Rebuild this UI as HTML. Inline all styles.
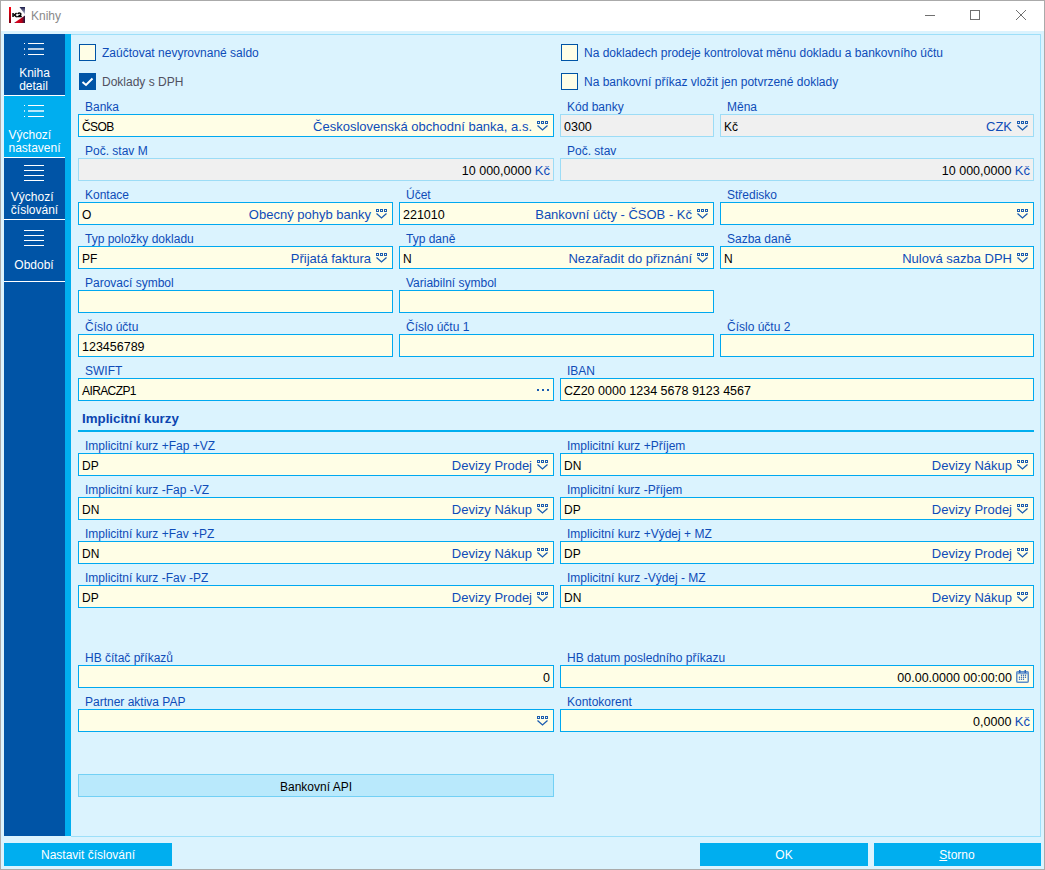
<!DOCTYPE html><html><head><meta charset="utf-8"><style>html,body{margin:0;padding:0;overflow:hidden;}body{width:1045px;height:870px;position:relative;overflow:hidden;background:#dbf3fe;font-family:"Liberation Sans",sans-serif;font-size:12px;}body>div,body>svg{position:absolute;}.t{white-space:nowrap;line-height:14px;}</style></head><body>
<div style="left:0px;top:0px;width:1045px;height:870px;background:#aaaaaa;"></div>
<div style="left:1px;top:1px;width:1043px;height:868px;background:#dbf3fe;"></div>
<div style="left:1px;top:1px;width:1043px;height:30px;background:#ffffff;"></div>
<svg style="left:9px;top:7px" width="16" height="16" viewBox="0 0 16 16"><defs><linearGradient id="rb" x1="0" y1="0" x2="0" y2="1"><stop offset="0" stop-color="#ff0010"/><stop offset="1" stop-color="#7a0010"/></linearGradient><linearGradient id="br" x1="0" y1="0" x2="1" y2="0"><stop offset="0" stop-color="#2a1a50"/><stop offset="0.25" stop-color="#e0001a"/><stop offset="0.7" stop-color="#b00018"/><stop offset="1" stop-color="#1a1a40"/></linearGradient><linearGradient id="tr" x1="0" y1="0" x2="0" y2="1"><stop offset="0" stop-color="#1a1a48"/><stop offset="1" stop-color="#c8cce0"/></linearGradient></defs><polygon points="10.5,0 16,0 16,7.5" fill="url(#tr)"/><polygon points="5,16 16,16 16,8.5" fill="url(#br)"/><rect x="0" y="0" width="2" height="16" fill="url(#rb)"/><rect x="3.3" y="6" width="1.5" height="4" fill="#000"/><path d="M7.6 6.2L5.4 8L7.6 9.8" fill="none" stroke="#000" stroke-width="1.5"/><path d="M8.6 7Q9.6 5.8 11 6.1Q12.4 6.6 11.6 7.9L9.2 9.5L12.8 9.5" fill="none" stroke="#000" stroke-width="1.4"/></svg>
<div class="t" style="left:31px;top:9px;color:#8a8a8a;font-size:12px;">Knihy</div>
<div style="left:925px;top:15px;width:10px;height:1px;background:#707070;"></div>
<div style="left:970px;top:10px;width:8px;height:8px;border:1px solid #707070"></div>
<svg style="left:1016px;top:10px" width="10" height="10" viewBox="0 0 10 10"><path d="M0 0L10 10M10 0L0 10" stroke="#707070" stroke-width="1"/></svg>
<div style="left:4px;top:34px;width:61px;height:802px;background:#0054a6;"></div>
<div style="left:65px;top:34px;width:6px;height:802px;background:#00aeef;"></div>
<div style="left:4px;top:95px;width:61px;height:1px;background:#ffffff;"></div>
<div style="left:24px;top:43px;width:1px;height:1px;background:#fff"></div>
<div style="left:28px;top:43px;width:16px;height:1px;background:#fff"></div>
<div style="left:24px;top:48px;width:1px;height:2px;background:rgba(255,255,255,0.72)"></div>
<div style="left:28px;top:48px;width:16px;height:2px;background:rgba(255,255,255,0.72)"></div>
<div style="left:24px;top:54px;width:1px;height:1px;background:#fff"></div>
<div style="left:28px;top:54px;width:16px;height:1px;background:#fff"></div>
<div style="left:4px;width:61px;top:67px;text-align:center;color:#fff;line-height:13px"><div style="display:inline-block;text-align:left;white-space:nowrap">Kniha<br>detail</div></div>
<div style="left:4px;top:96px;width:67px;height:61px;background:#00aeef;"></div>
<div style="left:4px;top:157px;width:61px;height:1px;background:#ffffff;"></div>
<div style="left:24px;top:105px;width:1px;height:1px;background:#fff"></div>
<div style="left:28px;top:105px;width:16px;height:1px;background:#fff"></div>
<div style="left:24px;top:110px;width:1px;height:2px;background:rgba(255,255,255,0.72)"></div>
<div style="left:28px;top:110px;width:16px;height:2px;background:rgba(255,255,255,0.72)"></div>
<div style="left:24px;top:116px;width:1px;height:1px;background:#fff"></div>
<div style="left:28px;top:116px;width:16px;height:1px;background:#fff"></div>
<div style="left:4px;width:61px;top:129px;text-align:center;color:#fff;line-height:13px"><div style="display:inline-block;text-align:left;white-space:nowrap">Výchozí<br>nastavení</div></div>
<div style="left:4px;top:219px;width:61px;height:1px;background:#ffffff;"></div>
<div style="left:24px;top:165px;width:20px;height:1px;background:#ffffff;"></div>
<div style="left:24px;top:170px;width:20px;height:1px;background:#ffffff;"></div>
<div style="left:24px;top:175px;width:20px;height:1px;background:#ffffff;"></div>
<div style="left:24px;top:180px;width:20px;height:1px;background:#ffffff;"></div>
<div style="left:4px;width:61px;top:191px;text-align:center;color:#fff;line-height:13px"><div style="display:inline-block;text-align:left;white-space:nowrap">Výchozí<br>číslování</div></div>
<div style="left:4px;top:281px;width:61px;height:1px;background:#ffffff;"></div>
<div style="left:24px;top:230px;width:20px;height:1px;background:#ffffff;"></div>
<div style="left:24px;top:235px;width:20px;height:1px;background:#ffffff;"></div>
<div style="left:24px;top:240px;width:20px;height:1px;background:#ffffff;"></div>
<div style="left:24px;top:245px;width:20px;height:1px;background:#ffffff;"></div>
<div class="t" style="left:4px;width:60px;top:258px;color:#fff;text-align:center;">Období</div>
<div style="left:71px;top:34px;width:970px;height:1px;background:#9ddff9;"></div>
<div style="left:1040px;top:34px;width:1px;height:803px;background:#9ddff9;"></div>
<div style="left:71px;top:836px;width:970px;height:1px;background:#9ddff9;"></div>
<div style="left:79px;top:44px;width:15px;height:15px;background:#fffee6;border:1px solid #0054a6"></div>
<div class="t" style="left:102px;top:46px;color:#0e4cb8;">Zaúčtovat nevyrovnané saldo</div>
<div style="left:79px;top:73px;width:17px;height:17px;background:#0054a6"></div>
<svg style="left:79px;top:73px" width="17" height="17" viewBox="0 0 17 17"><polyline points="3.5,9 7,12 13.5,5.5" fill="none" stroke="#fff" stroke-width="2"/></svg>
<div class="t" style="left:102px;top:75px;color:#505060;">Doklady s DPH</div>
<div style="left:561px;top:44px;width:15px;height:15px;background:#fffee6;border:1px solid #0054a6"></div>
<div class="t" style="left:584px;top:46px;color:#0e4cb8;">Na dokladech prodeje kontrolovat měnu dokladu a bankovního účtu</div>
<div style="left:561px;top:73px;width:15px;height:15px;background:#fffee6;border:1px solid #0054a6"></div>
<div class="t" style="left:584px;top:75px;color:#0e4cb8;">Na bankovní příkaz vložit jen potvrzené doklady</div>
<div style="left:78px;top:114px;width:474px;height:21px;background:#fffee6;border:1px solid #00a8f0"></div>
<div class="t" style="left:85px;top:100px;color:#0e4cb8;">Banka</div>
<div class="t" style="left:82px;top:120px;color:#000;letter-spacing:-0.6px;">ČSOB</div>
<svg style="left:537px;top:121px" width="12" height="10" viewBox="0 0 12 10"><rect x="0.5" y="0.5" width="2" height="2" fill="none" stroke="#1b5cb0" stroke-width="1"/><rect x="4.5" y="0.5" width="2" height="2" fill="none" stroke="#1b5cb0" stroke-width="1"/><rect x="8.5" y="0.5" width="2" height="2" fill="none" stroke="#1b5cb0" stroke-width="1"/><polyline points="0.5,4.5 5.5,9 10.5,4.5" fill="none" stroke="#1b5cb0" stroke-width="1.3"/></svg>
<div class="t" style="right:513px;top:120px;color:#0e4cb8;text-align:right;font-size:13px;">Československá obchodní banka, a.s.</div>
<div style="left:560px;top:114px;width:152px;height:21px;background:#f0f0f0;border:1px solid #9cdcf6"></div>
<div class="t" style="left:567px;top:100px;color:#0e4cb8;">Kód banky</div>
<div class="t" style="left:564px;top:120px;color:#000;font-size:12.5px;">0300</div>
<div style="left:720px;top:114px;width:312px;height:21px;background:#f0f0f0;border:1px solid #9cdcf6"></div>
<div class="t" style="left:727px;top:100px;color:#0e4cb8;">Měna</div>
<div class="t" style="left:724px;top:120px;color:#000;">Kč</div>
<svg style="left:1017px;top:121px" width="12" height="10" viewBox="0 0 12 10"><rect x="0.5" y="0.5" width="2" height="2" fill="none" stroke="#1b5cb0" stroke-width="1"/><rect x="4.5" y="0.5" width="2" height="2" fill="none" stroke="#1b5cb0" stroke-width="1"/><rect x="8.5" y="0.5" width="2" height="2" fill="none" stroke="#1b5cb0" stroke-width="1"/><polyline points="0.5,4.5 5.5,9 10.5,4.5" fill="none" stroke="#1b5cb0" stroke-width="1.3"/></svg>
<div class="t" style="right:33px;top:120px;color:#0e4cb8;text-align:right;font-size:13px;">CZK</div>
<div style="left:78px;top:158px;width:474px;height:21px;background:#f0f0f0;border:1px solid #9cdcf6"></div>
<div class="t" style="left:85px;top:144px;color:#0e4cb8;">Poč. stav M</div>
<div class="t" style="right:495px;top:164px;color:#000;text-align:right;font-size:12.5px;">10 000,0000 <span style="color:#0e4cb8;font-size:13px">Kč</span></div>
<div style="left:560px;top:158px;width:472px;height:21px;background:#f0f0f0;border:1px solid #9cdcf6"></div>
<div class="t" style="left:567px;top:144px;color:#0e4cb8;">Poč. stav</div>
<div class="t" style="right:15px;top:164px;color:#000;text-align:right;font-size:12.5px;">10 000,0000 <span style="color:#0e4cb8;font-size:13px">Kč</span></div>
<div style="left:78px;top:202px;width:313px;height:21px;background:#fffee6;border:1px solid #00a8f0"></div>
<div class="t" style="left:85px;top:188px;color:#0e4cb8;">Kontace</div>
<div class="t" style="left:82px;top:208px;color:#000;">O</div>
<svg style="left:376px;top:209px" width="12" height="10" viewBox="0 0 12 10"><rect x="0.5" y="0.5" width="2" height="2" fill="none" stroke="#1b5cb0" stroke-width="1"/><rect x="4.5" y="0.5" width="2" height="2" fill="none" stroke="#1b5cb0" stroke-width="1"/><rect x="8.5" y="0.5" width="2" height="2" fill="none" stroke="#1b5cb0" stroke-width="1"/><polyline points="0.5,4.5 5.5,9 10.5,4.5" fill="none" stroke="#1b5cb0" stroke-width="1.3"/></svg>
<div class="t" style="right:674px;top:208px;color:#0e4cb8;text-align:right;font-size:13px;">Obecný pohyb banky</div>
<div style="left:399px;top:202px;width:313px;height:21px;background:#fffee6;border:1px solid #00a8f0"></div>
<div class="t" style="left:406px;top:188px;color:#0e4cb8;">Účet</div>
<div class="t" style="left:403px;top:208px;color:#000;font-size:12.5px;">221010</div>
<svg style="left:697px;top:209px" width="12" height="10" viewBox="0 0 12 10"><rect x="0.5" y="0.5" width="2" height="2" fill="none" stroke="#1b5cb0" stroke-width="1"/><rect x="4.5" y="0.5" width="2" height="2" fill="none" stroke="#1b5cb0" stroke-width="1"/><rect x="8.5" y="0.5" width="2" height="2" fill="none" stroke="#1b5cb0" stroke-width="1"/><polyline points="0.5,4.5 5.5,9 10.5,4.5" fill="none" stroke="#1b5cb0" stroke-width="1.3"/></svg>
<div class="t" style="right:353px;top:208px;color:#0e4cb8;text-align:right;font-size:13px;">Bankovní účty - ČSOB - Kč</div>
<div style="left:720px;top:202px;width:312px;height:21px;background:#fffee6;border:1px solid #00a8f0"></div>
<div class="t" style="left:727px;top:188px;color:#0e4cb8;">Středisko</div>
<svg style="left:1017px;top:209px" width="12" height="10" viewBox="0 0 12 10"><rect x="0.5" y="0.5" width="2" height="2" fill="none" stroke="#1b5cb0" stroke-width="1"/><rect x="4.5" y="0.5" width="2" height="2" fill="none" stroke="#1b5cb0" stroke-width="1"/><rect x="8.5" y="0.5" width="2" height="2" fill="none" stroke="#1b5cb0" stroke-width="1"/><polyline points="0.5,4.5 5.5,9 10.5,4.5" fill="none" stroke="#1b5cb0" stroke-width="1.3"/></svg>
<div style="left:78px;top:246px;width:313px;height:21px;background:#fffee6;border:1px solid #00a8f0"></div>
<div class="t" style="left:85px;top:232px;color:#0e4cb8;">Typ položky dokladu</div>
<div class="t" style="left:82px;top:252px;color:#000;">PF</div>
<svg style="left:376px;top:253px" width="12" height="10" viewBox="0 0 12 10"><rect x="0.5" y="0.5" width="2" height="2" fill="none" stroke="#1b5cb0" stroke-width="1"/><rect x="4.5" y="0.5" width="2" height="2" fill="none" stroke="#1b5cb0" stroke-width="1"/><rect x="8.5" y="0.5" width="2" height="2" fill="none" stroke="#1b5cb0" stroke-width="1"/><polyline points="0.5,4.5 5.5,9 10.5,4.5" fill="none" stroke="#1b5cb0" stroke-width="1.3"/></svg>
<div class="t" style="right:674px;top:252px;color:#0e4cb8;text-align:right;font-size:13px;">Přijatá faktura</div>
<div style="left:399px;top:246px;width:313px;height:21px;background:#fffee6;border:1px solid #00a8f0"></div>
<div class="t" style="left:406px;top:232px;color:#0e4cb8;">Typ daně</div>
<div class="t" style="left:403px;top:252px;color:#000;">N</div>
<svg style="left:697px;top:253px" width="12" height="10" viewBox="0 0 12 10"><rect x="0.5" y="0.5" width="2" height="2" fill="none" stroke="#1b5cb0" stroke-width="1"/><rect x="4.5" y="0.5" width="2" height="2" fill="none" stroke="#1b5cb0" stroke-width="1"/><rect x="8.5" y="0.5" width="2" height="2" fill="none" stroke="#1b5cb0" stroke-width="1"/><polyline points="0.5,4.5 5.5,9 10.5,4.5" fill="none" stroke="#1b5cb0" stroke-width="1.3"/></svg>
<div class="t" style="right:353px;top:252px;color:#0e4cb8;text-align:right;font-size:13px;">Nezařadit do přiznání</div>
<div style="left:720px;top:246px;width:312px;height:21px;background:#fffee6;border:1px solid #00a8f0"></div>
<div class="t" style="left:727px;top:232px;color:#0e4cb8;">Sazba daně</div>
<div class="t" style="left:724px;top:252px;color:#000;">N</div>
<svg style="left:1017px;top:253px" width="12" height="10" viewBox="0 0 12 10"><rect x="0.5" y="0.5" width="2" height="2" fill="none" stroke="#1b5cb0" stroke-width="1"/><rect x="4.5" y="0.5" width="2" height="2" fill="none" stroke="#1b5cb0" stroke-width="1"/><rect x="8.5" y="0.5" width="2" height="2" fill="none" stroke="#1b5cb0" stroke-width="1"/><polyline points="0.5,4.5 5.5,9 10.5,4.5" fill="none" stroke="#1b5cb0" stroke-width="1.3"/></svg>
<div class="t" style="right:33px;top:252px;color:#0e4cb8;text-align:right;font-size:13px;">Nulová sazba DPH</div>
<div style="left:78px;top:290px;width:313px;height:21px;background:#fffee6;border:1px solid #00a8f0"></div>
<div class="t" style="left:85px;top:276px;color:#0e4cb8;">Parovací symbol</div>
<div style="left:399px;top:290px;width:313px;height:21px;background:#fffee6;border:1px solid #00a8f0"></div>
<div class="t" style="left:406px;top:276px;color:#0e4cb8;">Variabilní symbol</div>
<div style="left:78px;top:334px;width:313px;height:21px;background:#fffee6;border:1px solid #00a8f0"></div>
<div class="t" style="left:85px;top:320px;color:#0e4cb8;">Číslo účtu</div>
<div class="t" style="left:82px;top:340px;color:#000;font-size:12.5px;">123456789</div>
<div style="left:399px;top:334px;width:313px;height:21px;background:#fffee6;border:1px solid #00a8f0"></div>
<div class="t" style="left:406px;top:320px;color:#0e4cb8;">Číslo účtu 1</div>
<div style="left:720px;top:334px;width:312px;height:21px;background:#fffee6;border:1px solid #00a8f0"></div>
<div class="t" style="left:727px;top:320px;color:#0e4cb8;">Číslo účtu 2</div>
<div style="left:78px;top:378px;width:474px;height:21px;background:#fffee6;border:1px solid #00a8f0"></div>
<div class="t" style="left:85px;top:364px;color:#0e4cb8;">SWIFT</div>
<div class="t" style="left:82px;top:384px;color:#000;letter-spacing:-0.6px;">AIRACZP1</div>
<div style="left:537px;top:389px;width:2px;height:2px;background:#1b5cb0;"></div>
<div style="left:542px;top:389px;width:2px;height:2px;background:#1b5cb0;"></div>
<div style="left:547px;top:389px;width:2px;height:2px;background:#1b5cb0;"></div>
<div style="left:560px;top:378px;width:472px;height:21px;background:#fffee6;border:1px solid #00a8f0"></div>
<div class="t" style="left:567px;top:364px;color:#0e4cb8;">IBAN</div>
<div class="t" style="left:564px;top:384px;color:#000;font-size:12.5px;">CZ20 0000 1234 5678 9123 4567</div>
<div class="t" style="left:82px;top:412px;color:#0c44b0;font-size:13.3px;font-weight:bold;">Implicitní kurzy</div>
<div style="left:78px;top:430px;width:956px;height:2px;background:#00aeef;"></div>
<div style="left:78px;top:453px;width:474px;height:21px;background:#fffee6;border:1px solid #00a8f0"></div>
<div class="t" style="left:85px;top:439px;color:#0e4cb8;">Implicitní kurz +Fap +VZ</div>
<div class="t" style="left:82px;top:459px;color:#000;">DP</div>
<svg style="left:537px;top:460px" width="12" height="10" viewBox="0 0 12 10"><rect x="0.5" y="0.5" width="2" height="2" fill="none" stroke="#1b5cb0" stroke-width="1"/><rect x="4.5" y="0.5" width="2" height="2" fill="none" stroke="#1b5cb0" stroke-width="1"/><rect x="8.5" y="0.5" width="2" height="2" fill="none" stroke="#1b5cb0" stroke-width="1"/><polyline points="0.5,4.5 5.5,9 10.5,4.5" fill="none" stroke="#1b5cb0" stroke-width="1.3"/></svg>
<div class="t" style="right:513px;top:459px;color:#0e4cb8;text-align:right;font-size:13px;">Devizy Prodej</div>
<div style="left:560px;top:453px;width:472px;height:21px;background:#fffee6;border:1px solid #00a8f0"></div>
<div class="t" style="left:567px;top:439px;color:#0e4cb8;">Implicitní kurz +Příjem</div>
<div class="t" style="left:564px;top:459px;color:#000;">DN</div>
<svg style="left:1017px;top:460px" width="12" height="10" viewBox="0 0 12 10"><rect x="0.5" y="0.5" width="2" height="2" fill="none" stroke="#1b5cb0" stroke-width="1"/><rect x="4.5" y="0.5" width="2" height="2" fill="none" stroke="#1b5cb0" stroke-width="1"/><rect x="8.5" y="0.5" width="2" height="2" fill="none" stroke="#1b5cb0" stroke-width="1"/><polyline points="0.5,4.5 5.5,9 10.5,4.5" fill="none" stroke="#1b5cb0" stroke-width="1.3"/></svg>
<div class="t" style="right:33px;top:459px;color:#0e4cb8;text-align:right;font-size:13px;">Devizy Nákup</div>
<div style="left:78px;top:497px;width:474px;height:21px;background:#fffee6;border:1px solid #00a8f0"></div>
<div class="t" style="left:85px;top:483px;color:#0e4cb8;">Implicitní kurz -Fap -VZ</div>
<div class="t" style="left:82px;top:503px;color:#000;">DN</div>
<svg style="left:537px;top:504px" width="12" height="10" viewBox="0 0 12 10"><rect x="0.5" y="0.5" width="2" height="2" fill="none" stroke="#1b5cb0" stroke-width="1"/><rect x="4.5" y="0.5" width="2" height="2" fill="none" stroke="#1b5cb0" stroke-width="1"/><rect x="8.5" y="0.5" width="2" height="2" fill="none" stroke="#1b5cb0" stroke-width="1"/><polyline points="0.5,4.5 5.5,9 10.5,4.5" fill="none" stroke="#1b5cb0" stroke-width="1.3"/></svg>
<div class="t" style="right:513px;top:503px;color:#0e4cb8;text-align:right;font-size:13px;">Devizy Nákup</div>
<div style="left:560px;top:497px;width:472px;height:21px;background:#fffee6;border:1px solid #00a8f0"></div>
<div class="t" style="left:567px;top:483px;color:#0e4cb8;">Implicitní kurz -Příjem</div>
<div class="t" style="left:564px;top:503px;color:#000;">DP</div>
<svg style="left:1017px;top:504px" width="12" height="10" viewBox="0 0 12 10"><rect x="0.5" y="0.5" width="2" height="2" fill="none" stroke="#1b5cb0" stroke-width="1"/><rect x="4.5" y="0.5" width="2" height="2" fill="none" stroke="#1b5cb0" stroke-width="1"/><rect x="8.5" y="0.5" width="2" height="2" fill="none" stroke="#1b5cb0" stroke-width="1"/><polyline points="0.5,4.5 5.5,9 10.5,4.5" fill="none" stroke="#1b5cb0" stroke-width="1.3"/></svg>
<div class="t" style="right:33px;top:503px;color:#0e4cb8;text-align:right;font-size:13px;">Devizy Prodej</div>
<div style="left:78px;top:541px;width:474px;height:21px;background:#fffee6;border:1px solid #00a8f0"></div>
<div class="t" style="left:85px;top:527px;color:#0e4cb8;">Implicitní kurz +Fav +PZ</div>
<div class="t" style="left:82px;top:547px;color:#000;">DN</div>
<svg style="left:537px;top:548px" width="12" height="10" viewBox="0 0 12 10"><rect x="0.5" y="0.5" width="2" height="2" fill="none" stroke="#1b5cb0" stroke-width="1"/><rect x="4.5" y="0.5" width="2" height="2" fill="none" stroke="#1b5cb0" stroke-width="1"/><rect x="8.5" y="0.5" width="2" height="2" fill="none" stroke="#1b5cb0" stroke-width="1"/><polyline points="0.5,4.5 5.5,9 10.5,4.5" fill="none" stroke="#1b5cb0" stroke-width="1.3"/></svg>
<div class="t" style="right:513px;top:547px;color:#0e4cb8;text-align:right;font-size:13px;">Devizy Nákup</div>
<div style="left:560px;top:541px;width:472px;height:21px;background:#fffee6;border:1px solid #00a8f0"></div>
<div class="t" style="left:567px;top:527px;color:#0e4cb8;">Implicitní kurz +Výdej + MZ</div>
<div class="t" style="left:564px;top:547px;color:#000;">DP</div>
<svg style="left:1017px;top:548px" width="12" height="10" viewBox="0 0 12 10"><rect x="0.5" y="0.5" width="2" height="2" fill="none" stroke="#1b5cb0" stroke-width="1"/><rect x="4.5" y="0.5" width="2" height="2" fill="none" stroke="#1b5cb0" stroke-width="1"/><rect x="8.5" y="0.5" width="2" height="2" fill="none" stroke="#1b5cb0" stroke-width="1"/><polyline points="0.5,4.5 5.5,9 10.5,4.5" fill="none" stroke="#1b5cb0" stroke-width="1.3"/></svg>
<div class="t" style="right:33px;top:547px;color:#0e4cb8;text-align:right;font-size:13px;">Devizy Prodej</div>
<div style="left:78px;top:585px;width:474px;height:21px;background:#fffee6;border:1px solid #00a8f0"></div>
<div class="t" style="left:85px;top:571px;color:#0e4cb8;">Implicitní kurz -Fav -PZ</div>
<div class="t" style="left:82px;top:591px;color:#000;">DP</div>
<svg style="left:537px;top:592px" width="12" height="10" viewBox="0 0 12 10"><rect x="0.5" y="0.5" width="2" height="2" fill="none" stroke="#1b5cb0" stroke-width="1"/><rect x="4.5" y="0.5" width="2" height="2" fill="none" stroke="#1b5cb0" stroke-width="1"/><rect x="8.5" y="0.5" width="2" height="2" fill="none" stroke="#1b5cb0" stroke-width="1"/><polyline points="0.5,4.5 5.5,9 10.5,4.5" fill="none" stroke="#1b5cb0" stroke-width="1.3"/></svg>
<div class="t" style="right:513px;top:591px;color:#0e4cb8;text-align:right;font-size:13px;">Devizy Prodej</div>
<div style="left:560px;top:585px;width:472px;height:21px;background:#fffee6;border:1px solid #00a8f0"></div>
<div class="t" style="left:567px;top:571px;color:#0e4cb8;">Implicitní kurz -Výdej - MZ</div>
<div class="t" style="left:564px;top:591px;color:#000;">DN</div>
<svg style="left:1017px;top:592px" width="12" height="10" viewBox="0 0 12 10"><rect x="0.5" y="0.5" width="2" height="2" fill="none" stroke="#1b5cb0" stroke-width="1"/><rect x="4.5" y="0.5" width="2" height="2" fill="none" stroke="#1b5cb0" stroke-width="1"/><rect x="8.5" y="0.5" width="2" height="2" fill="none" stroke="#1b5cb0" stroke-width="1"/><polyline points="0.5,4.5 5.5,9 10.5,4.5" fill="none" stroke="#1b5cb0" stroke-width="1.3"/></svg>
<div class="t" style="right:33px;top:591px;color:#0e4cb8;text-align:right;font-size:13px;">Devizy Nákup</div>
<div style="left:78px;top:665px;width:474px;height:21px;background:#fffee6;border:1px solid #00a8f0"></div>
<div class="t" style="left:85px;top:651px;color:#0e4cb8;">HB čítač příkazů</div>
<div class="t" style="right:495px;top:671px;color:#000;text-align:right;font-size:12.5px;">0</div>
<div style="left:560px;top:665px;width:472px;height:21px;background:#fffee6;border:1px solid #00a8f0"></div>
<div class="t" style="left:567px;top:651px;color:#0e4cb8;">HB datum posledního příkazu</div>
<svg style="left:1016px;top:670px" width="13" height="13" viewBox="0 0 13 13"><rect x="0.75" y="1.75" width="11.5" height="10.5" rx="1" fill="none" stroke="#5a8cc8" stroke-width="1.5"/><rect x="0.75" y="1.75" width="11.5" height="2.5" fill="#7aa3d4"/><rect x="3" y="0" width="1.5" height="3" fill="#2a64b4"/><rect x="8.5" y="0" width="1.5" height="3" fill="#2a64b4"/><circle cx="5.5" cy="5.3" r="0.7" fill="#2a64b4"/><circle cx="7.5" cy="5.3" r="0.7" fill="#2a64b4"/><circle cx="9.5" cy="5.3" r="0.7" fill="#2a64b4"/><circle cx="3.5" cy="7.3" r="0.7" fill="#2a64b4"/><circle cx="5.5" cy="7.3" r="0.7" fill="#2a64b4"/><circle cx="7.5" cy="7.3" r="0.7" fill="#2a64b4"/><circle cx="9.5" cy="7.3" r="0.7" fill="#2a64b4"/><circle cx="3.5" cy="9.3" r="0.7" fill="#2a64b4"/><circle cx="5.5" cy="9.3" r="0.7" fill="#2a64b4"/><circle cx="7.5" cy="9.3" r="0.7" fill="#2a64b4"/></svg>
<div class="t" style="right:33px;top:671px;color:#000;text-align:right;font-size:12.5px;">00.00.0000 00:00:00</div>
<div style="left:78px;top:709px;width:474px;height:21px;background:#fffee6;border:1px solid #00a8f0"></div>
<div class="t" style="left:85px;top:695px;color:#0e4cb8;">Partner aktiva PAP</div>
<svg style="left:537px;top:716px" width="12" height="10" viewBox="0 0 12 10"><rect x="0.5" y="0.5" width="2" height="2" fill="none" stroke="#1b5cb0" stroke-width="1"/><rect x="4.5" y="0.5" width="2" height="2" fill="none" stroke="#1b5cb0" stroke-width="1"/><rect x="8.5" y="0.5" width="2" height="2" fill="none" stroke="#1b5cb0" stroke-width="1"/><polyline points="0.5,4.5 5.5,9 10.5,4.5" fill="none" stroke="#1b5cb0" stroke-width="1.3"/></svg>
<div style="left:560px;top:709px;width:472px;height:21px;background:#fffee6;border:1px solid #00a8f0"></div>
<div class="t" style="left:567px;top:695px;color:#0e4cb8;">Kontokorent</div>
<div class="t" style="right:15px;top:715px;color:#000;text-align:right;font-size:12.5px;">0,0000 <span style="color:#0e4cb8;font-size:13px">Kč</span></div>
<div style="left:78px;top:774px;width:474px;height:21px;background:#b9e9fc;border:1px solid #72d0f5"></div>
<div class="t" style="left:166px;width:300px;top:780px;color:#000;text-align:center;">Bankovní API</div>
<div style="left:4px;top:843px;width:168px;height:23px;background:#00aeef;"></div>
<div class="t" style="left:4px;width:168px;top:848px;color:#fff;text-align:center;">Nastavit číslování</div>
<div style="left:700px;top:843px;width:168px;height:23px;background:#00aeef;"></div>
<div class="t" style="left:700px;width:168px;top:848px;color:#fff;text-align:center;">OK</div>
<div style="left:874px;top:843px;width:167px;height:23px;background:#00aeef;"></div>
<div class="t" style="left:873px;width:168px;top:848px;color:#fff;text-align:center;"><u>S</u>torno</div>
</body></html>
